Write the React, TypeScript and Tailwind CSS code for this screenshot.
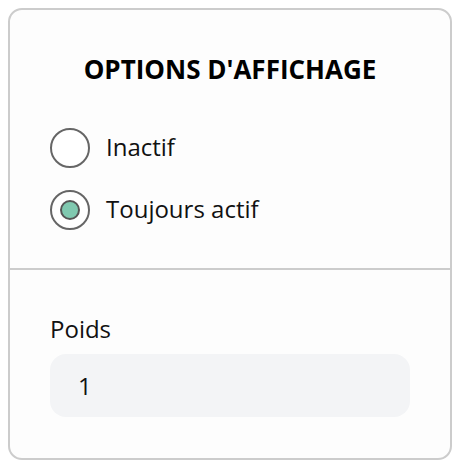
import React from "react";

export default function App() {
  return (
    <div className="p-2 bg-white" style={{ fontFamily: '"Open Sans", sans-serif' }}>
      <div className="w-[444px] h-[452px] border-2 border-[#cccccc] rounded-[14px] bg-[#fdfdfd] flex flex-col overflow-hidden">
        <div className="pt-[43px] pb-[38px] px-[40px] flex flex-col">
          <div className="h-[32px] leading-[32px] text-center text-[26px] font-bold text-black">
            OPTIONS D'AFFICHAGE
          </div>
          <div className="mt-[43px] flex flex-col gap-[22px]">
            <label className="flex items-center h-[40px]">
              <span className="w-[40px] h-[40px] rounded-full border-2 border-[#666666] bg-white"></span>
              <span className="ml-[16px] text-[24px] text-[#111111] leading-[32px] -mt-[2px]">Inactif</span>
            </label>
            <label className="flex items-center h-[40px]">
              <span className="w-[40px] h-[40px] rounded-full border-2 border-[#666666] bg-white flex items-center justify-center">
                <span className="w-[20px] h-[20px] rounded-full border-2 border-[#555555] bg-[#80c9b0]"></span>
              </span>
              <span className="ml-[16px] text-[24px] text-[#111111] leading-[32px] -mt-[2px]">Toujours actif</span>
            </label>
          </div>
        </div>
        <div className="h-[2px] bg-[#cccccc]"></div>
        <div className="pt-[43px] px-[40px] flex flex-col">
          <div className="h-[32px] leading-[32px] text-[24px] text-[#111111]">Poids</div>
          <div className="mt-[9px] h-[63px] rounded-[16px] bg-[#f3f4f6] flex items-center pl-[28px] text-[24px] text-[#111111]">
            1
          </div>
        </div>
      </div>
    </div>
  );
}
